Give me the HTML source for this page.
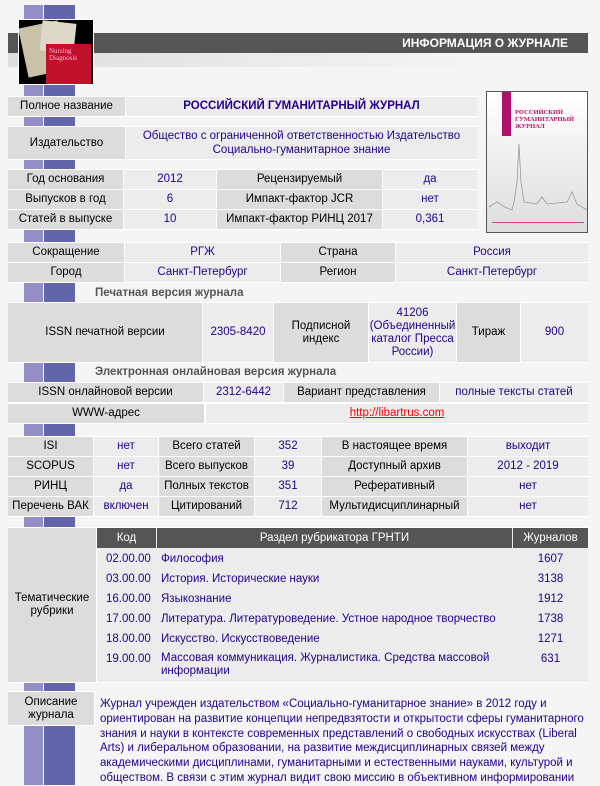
<!DOCTYPE html>
<html><head><meta charset="utf-8"><style>
body{margin:0;width:600px;height:779px;background:#f5f5f5;position:relative;overflow:hidden;font-family:"Liberation Sans","DejaVu Sans",sans-serif;font-size:11.5px;color:#000}
.s1{position:absolute;left:24px;width:19px;top:5px;height:780px;background:#938ec4}
.s2{position:absolute;left:44px;width:31px;top:5px;height:780px;background:#6265a9}
.w{position:absolute;background:#fff}
.c{position:absolute;box-sizing:border-box;display:flex;align-items:center;justify-content:center;text-align:center;line-height:13px;background:#ececec;color:#22008b;white-space:nowrap}
.l{background:#dcdcdc;color:#000}
.h{position:absolute;font-weight:bold;color:#555;font-size:11.5px}
</style></head><body>
<div class="s1"></div><div class="s2"></div>
<div style="position:absolute;left:8px;top:33px;width:580px;height:20px;background:#555"></div>
<div style="position:absolute;left:8px;top:53px;width:480px;height:14px;background:linear-gradient(90deg,#dedede,#ececec 60%,#f5f5f5)"></div>
<div style="position:absolute;left:360px;top:33px;width:208px;height:20px;line-height:20px;text-align:right;color:#fff;font-weight:bold;font-size:12px">ИНФОРМАЦИЯ О ЖУРНАЛЕ</div>
<div style="position:absolute;left:18px;top:19px;width:74px;height:64px;background:#000;border:1px solid #fff;overflow:hidden">
<div style="position:absolute;left:4px;top:4px;width:40px;height:50px;background:#c9c2a8;transform:rotate(-12deg)"></div>
<div style="position:absolute;left:22px;top:2px;width:34px;height:30px;background:#ddd8c8;transform:rotate(6deg)"></div>
<div style="position:absolute;left:27px;top:24px;width:45px;height:40px;background:#c0102a;font-family:'Liberation Serif',serif;font-size:7px;line-height:7px;padding:4px 3px;box-sizing:border-box;color:#fbd">Nursing<br>Diagnosis</div></div>
<div style="position:absolute;left:486px;top:91px;width:102px;height:142px;box-sizing:border-box;border:1px solid #555;background:linear-gradient(#fff,#ddd)">
<div style="position:absolute;left:15px;top:0;width:9px;height:44px;background:#b0106a"></div>
<div style="position:absolute;left:28px;top:17px;color:#c0106a;font-family:'Liberation Serif',serif;font-size:6.5px;font-weight:bold;line-height:7px">РОССИЙСКИЙ<br>ГУМАНИТАРНЫЙ<br>ЖУРНАЛ</div>
<div style="position:absolute;left:5px;top:130px;width:92px;height:1px;background:#d04090"></div>
<svg style="position:absolute;left:0;top:50px" width="100" height="80"><path d="M2 65 L10 60 L18 65 L25 68 L27 60 L30 40 L32 2 L34 40 L37 60 L50 62 L55 55 L60 62 L80 60 L85 50 L90 62 L100 68" fill="none" stroke="#999" stroke-width="0.8"/></svg></div>

<div class="w" style="left:8px;top:96px;width:469px;height:21px"></div>
<div class="w" style="left:8px;top:126px;width:469px;height:34px"></div>
<div class="w" style="left:8px;top:169px;width:469px;height:61px"></div>
<div class="w" style="left:8px;top:242px;width:580px;height:41px"></div>
<div class="w" style="left:8px;top:302px;width:580px;height:61px"></div>
<div class="w" style="left:8px;top:382px;width:580px;height:42px"></div>
<div class="w" style="left:8px;top:436px;width:580px;height:81px"></div>
<div class="w" style="left:8px;top:527px;width:580px;height:156px"></div>
<div class="w" style="left:8px;top:691px;width:87px;height:35px"></div>

<div class="c l" style="left:8px;top:97px;width:117px;height:19px">Полное название</div>
<div class="c" style="left:126px;top:97px;width:351px;height:19px;font-weight:bold">РОССИЙСКИЙ ГУМАНИТАРНЫЙ ЖУРНАЛ</div>
<div class="c l" style="left:8px;top:127px;width:117px;height:32px">Издательство</div>
<div class="c" style="left:126px;top:127px;width:351px;height:32px;line-height:14px">Общество с ограниченной ответственностью Издательство<br>Социально-гуманитарное знание</div>

<div class="c l" style="left:8px;top:170px;width:115px;height:19px">Год основания</div>
<div class="c" style="left:124px;top:170px;width:92px;height:19px">2012</div>
<div class="c l" style="left:217px;top:170px;width:165px;height:19px">Рецензируемый</div>
<div class="c" style="left:383px;top:170px;width:94px;height:19px">да</div>
<div class="c l" style="left:8px;top:190px;width:115px;height:19px">Выпусков в год</div>
<div class="c" style="left:124px;top:190px;width:92px;height:19px">6</div>
<div class="c l" style="left:217px;top:190px;width:165px;height:19px">Импакт-фактор JCR</div>
<div class="c" style="left:383px;top:190px;width:94px;height:19px">нет</div>
<div class="c l" style="left:8px;top:210px;width:115px;height:19px">Статей в выпуске</div>
<div class="c" style="left:124px;top:210px;width:92px;height:19px">10</div>
<div class="c l" style="left:217px;top:210px;width:165px;height:19px">Импакт-фактор РИНЦ 2017</div>
<div class="c" style="left:383px;top:210px;width:94px;height:19px">0,361</div>

<div class="c l" style="left:8px;top:243px;width:116px;height:19px">Сокращение</div>
<div class="c" style="left:125px;top:243px;width:155px;height:19px">РГЖ</div>
<div class="c l" style="left:281px;top:243px;width:114px;height:19px">Страна</div>
<div class="c" style="left:396px;top:243px;width:192px;height:19px">Россия</div>
<div class="c l" style="left:8px;top:263px;width:116px;height:19px">Город</div>
<div class="c" style="left:125px;top:263px;width:155px;height:19px">Санкт-Петербург</div>
<div class="c l" style="left:281px;top:263px;width:114px;height:19px">Регион</div>
<div class="c" style="left:396px;top:263px;width:192px;height:19px">Санкт-Петербург</div>

<div class="h" style="left:95px;top:287px">Печатная версия журнала</div>
<div class="c l" style="left:8px;top:303px;width:194px;height:59px">ISSN печатной версии</div>
<div class="c" style="left:203px;top:303px;width:70px;height:59px">2305-8420</div>
<div class="c l" style="left:274px;top:303px;width:94px;height:59px">Подписной<br>индекс</div>
<div class="c" style="left:369px;top:303px;width:87px;height:59px">41206<br>(Объединенный<br>каталог Пресса<br>России)</div>
<div class="c l" style="left:457px;top:303px;width:63px;height:59px">Тираж</div>
<div class="c" style="left:521px;top:303px;width:67px;height:59px">900</div>

<div class="h" style="left:95px;top:366px">Электронная онлайновая версия журнала</div>
<div class="c l" style="left:8px;top:383px;width:195px;height:19px">ISSN онлайновой версии</div>
<div class="c" style="left:204px;top:383px;width:79px;height:19px">2312-6442</div>
<div class="c l" style="left:284px;top:383px;width:155px;height:19px">Вариант представления</div>
<div class="c" style="left:440px;top:383px;width:148px;height:19px">полные тексты статей</div>
<div class="c l" style="left:8px;top:404px;width:196px;height:19px">WWW-адрес</div>
<div class="c" style="left:206px;top:404px;width:382px;height:19px"><span style="color:#f00;text-decoration:underline">http://libartrus.com</span></div>

<div class="c l" style="left:8px;top:437px;width:85px;height:19px">ISI</div>
<div class="c" style="left:94px;top:437px;width:64px;height:19px">нет</div>
<div class="c l" style="left:159px;top:437px;width:95px;height:19px">Всего статей</div>
<div class="c" style="left:255px;top:437px;width:66px;height:19px">352</div>
<div class="c l" style="left:322px;top:437px;width:145px;height:19px">В настоящее время</div>
<div class="c" style="left:468px;top:437px;width:120px;height:19px">выходит</div>
<div class="c l" style="left:8px;top:457px;width:85px;height:19px">SCOPUS</div>
<div class="c" style="left:94px;top:457px;width:64px;height:19px">нет</div>
<div class="c l" style="left:159px;top:457px;width:95px;height:19px">Всего выпусков</div>
<div class="c" style="left:255px;top:457px;width:66px;height:19px">39</div>
<div class="c l" style="left:322px;top:457px;width:145px;height:19px">Доступный архив</div>
<div class="c" style="left:468px;top:457px;width:120px;height:19px">2012 - 2019</div>
<div class="c l" style="left:8px;top:477px;width:85px;height:19px">РИНЦ</div>
<div class="c" style="left:94px;top:477px;width:64px;height:19px">да</div>
<div class="c l" style="left:159px;top:477px;width:95px;height:19px">Полных текстов</div>
<div class="c" style="left:255px;top:477px;width:66px;height:19px">351</div>
<div class="c l" style="left:322px;top:477px;width:145px;height:19px">Реферативный</div>
<div class="c" style="left:468px;top:477px;width:120px;height:19px">нет</div>
<div class="c l" style="left:8px;top:497px;width:85px;height:19px">Перечень ВАК</div>
<div class="c" style="left:94px;top:497px;width:64px;height:19px">включен</div>
<div class="c l" style="left:159px;top:497px;width:95px;height:19px">Цитирований</div>
<div class="c" style="left:255px;top:497px;width:66px;height:19px">712</div>
<div class="c l" style="left:322px;top:497px;width:145px;height:19px">Мультидисциплинарный</div>
<div class="c" style="left:468px;top:497px;width:120px;height:19px">нет</div>

<div class="c l" style="left:8px;top:528px;width:88px;height:154px">Тематические<br>рубрики</div>
<div style="position:absolute;left:97px;top:528px;width:491px;height:154px;background:#ececec"></div>
<div class="c" style="left:97px;top:528px;width:59px;height:20px;background:#555;color:#fff">Код</div>
<div class="c" style="left:157px;top:528px;width:355px;height:20px;background:#555;color:#fff">Раздел рубрикатора ГРНТИ</div>
<div class="c" style="left:513px;top:528px;width:75px;height:20px;background:#555;color:#fff">Журналов</div>
<div style="position:absolute;left:106px;top:549px;line-height:20px;color:#22008b">02.00.00<br>03.00.00<br>16.00.00<br>17.00.00<br>18.00.00<br>19.00.00</div>
<div style="position:absolute;left:161px;top:549px;line-height:20px;color:#22008b;width:345px;white-space:nowrap">Философия<br>История. Исторические науки<br>Языкознание<br>Литература. Литературоведение. Устное народное творчество<br>Искусство. Искусствоведение<br><span style="display:block;line-height:13px;padding-top:3px">Массовая коммуникация. Журналистика. Средства массовой<br>информации</span></div>
<div style="position:absolute;left:513px;top:549px;width:75px;text-align:center;line-height:20px;color:#22008b">1607<br>3138<br>1912<br>1738<br>1271<br>631</div>

<div class="c l" style="left:8px;top:692px;width:86px;height:33px">Описание<br>журнала</div>
<div style="position:absolute;left:100px;top:697px;width:490px;line-height:14.8px;color:#22008b;white-space:nowrap">Журнал учрежден издательством «Социально-гуманитарное знание» в 2012 году и<br>ориентирован на развитие концепции непредвзятости и открытости сферы гуманитарного<br>знания и науки в контексте современных представлений о свободных искусствах (Liberal<br>Arts) и либеральном образовании, на развитие междисциплинарных связей между<br>академическими дисциплинами, гуманитарными и естественными науками, культурой и<br>обществом. В связи с этим журнал видит свою миссию в объективном информировании</div>
</body></html>
